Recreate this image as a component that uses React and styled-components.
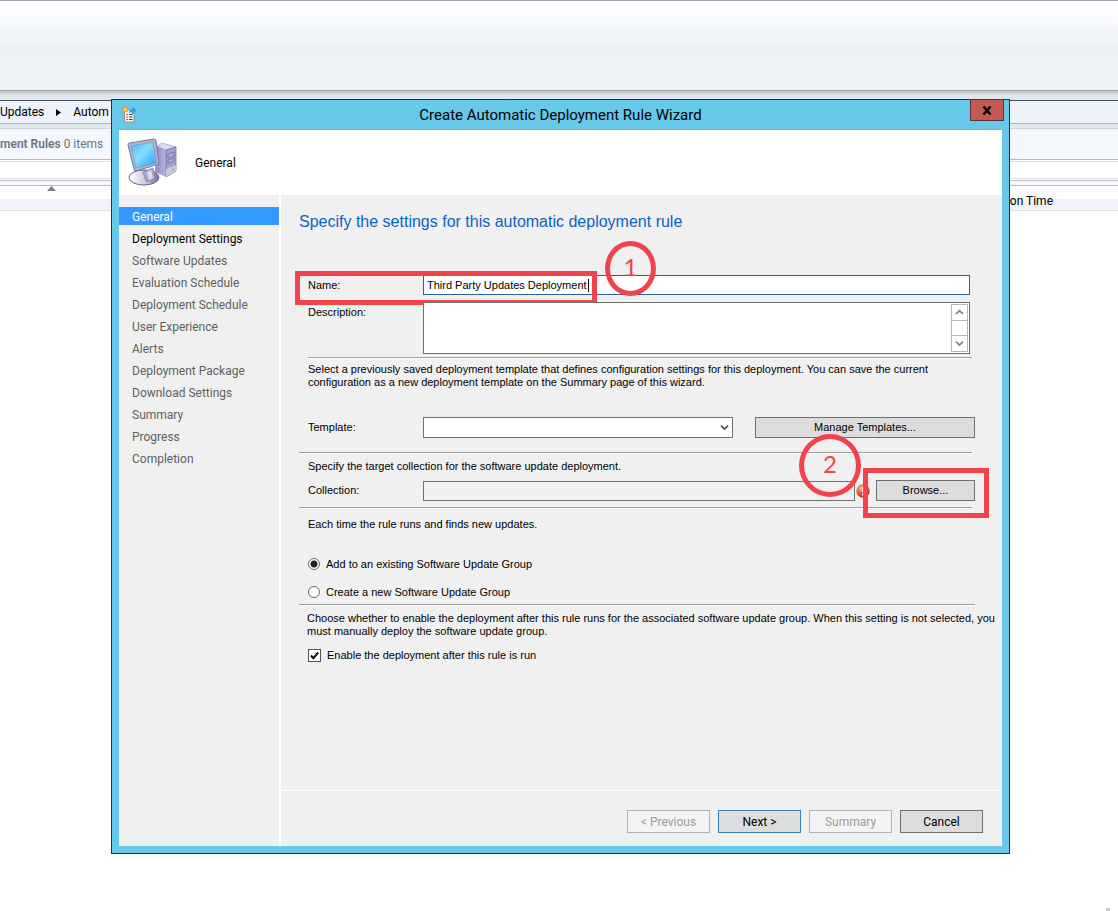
import React, { useState } from 'react';
import styled, { createGlobalStyle } from 'styled-components';

const GlobalStyle = createGlobalStyle`
    * {
        box-sizing: border-box;
    }

    body {
        margin: 0;
        background: #ffffff;
        color: #000000;
        font-family: Roboto, 'Noto Sans', sans-serif;
        font-size: 12px;
    }

    button, input, textarea, select {
        font: inherit;
        color: inherit;
        margin: 0;
        border-radius: 0;
        outline: none;
    }
`;

// ---------- console window behind the wizard ----------

const Page = styled.div`
    position: relative;
    min-height: 100vh;
    overflow: hidden;
`;

const Ribbon = styled.div`
    height: 91px;
    border-top: 1px solid #9ea2b0;
    border-bottom: 1px solid #a0a4ab;
    background: linear-gradient(#ffffff, #fbfcfd 15%, #edf1f6 50%, #eff3f8);
`;

const RibbonShadow = styled.div`
    height: 9px;
    background: linear-gradient(#c0c4ca, #dfe5ec 50%, #e1e8f0);
`;

const Breadcrumb = styled.nav`
    display: flex;
    align-items: center;
    gap: 12px;
    height: 24px;
    border-top: 1px solid #46535f;
    border-bottom: 1px solid #a9b3bf;
    background: #edf2fb;
`;

const CrumbArrow = styled.svg`
    width: 5px;
    height: 7px;
    display: block;
`;

const Gutter = styled.div`
    height: 4px;
    background: #e1e8f0;
`;

const ListTitle = styled.div`
    height: 32px;
    border-top: 1px solid #ccd4e0;
    border-bottom: 1px solid #b4b8c1;
    background: #f4f7fc;
    color: #6b7482;
    line-height: 30px;
    white-space: nowrap;

    b {
        font-weight: 600;
    }
`;

const SearchBar = styled.div`
    height: 18px;
    margin-top: 1px;
    border-top: 1px solid #dcdfe5;
    border-bottom: 1px solid #dcdfe5;
    background: #ffffff;
`;

const BarEdge = styled.div`
    height: 6px;
    margin-top: 1px;
    border-top: 1px solid #b9bcc6;
    border-bottom: 1px solid #b9bcc6;
    background: #f6f7fb;
`;

const ColumnHeader = styled.div`
    display: flex;
    justify-content: space-between;
    height: 25px;
    padding: 0 65px 0 47px;
    border-bottom: 1px solid #dde1e5;
    background: linear-gradient(#ffffff 13px, #f0f3f7 13px);
    line-height: 30px;
`;

const SortArrow = styled.svg`
    width: 9px;
    height: 5px;
`;

const Grip = styled.i`
    position: absolute;
    right: 8px;
    bottom: 0;
    width: 4px;
    height: 3px;
    background: #cccccc;
`;

// ---------- wizard window ----------

const Dialog = styled.section`
    position: absolute;
    top: 99px;
    left: 111px;
    right: 108px;
    border: 1px solid #1f3540;
    padding: 0 7px 7px;
    background: #66c9ea;
`;

const TitleBar = styled.header`
    display: flex;
    justify-content: center;
    height: 30px;
    border-bottom: 1px solid #6fb4cc;
    font-size: 15px;
    line-height: 30px;
`;

const TitleIcon = styled.svg`
    position: absolute;
    top: 5px;
    left: 9px;
    width: 17px;
    height: 18px;
`;

const CloseButton = styled.button`
    position: absolute;
    top: -1px;
    right: 5px;
    width: 34px;
    height: 22px;
    padding: 0;
    border: 1px solid #5c3337;
    background: #c35b52;

    svg {
        display: block;
        margin: 0 auto;
    }
`;

const Banner = styled.div`
    display: flex;
    align-items: center;
    gap: 16px;
    height: 65px;
    padding-left: 8px;
    background: #ffffff;
`;

const Body = styled.div`
    display: grid;
    grid-template-columns: 160px minmax(0, 1fr);
    min-height: 651px;
    background: #f0f0f0;
`;

const Steps = styled.ul`
    list-style: none;
    margin: 0;
    padding: 12px 0 0;
`;

const Step = styled.li`
    height: 18px;
    margin-bottom: 4px;
    padding-left: 13px;
    line-height: 20px;
    color: ${({ $state }) => ($state === 'current' ? '#ffffff' : $state === 'next' ? '#000000' : '#5f5f5f')};
    background: ${({ $state }) => ($state === 'current' ? '#3399ff' : 'transparent')};
`;

const Pane = styled.main`
    display: flex;
    flex-direction: column;
    border-left: 2px solid #ffffff;
`;

const Form = styled.form`
    flex: 1;
    padding: 17px 27px 0 18px;
    font-family: 'Liberation Sans', Arial, sans-serif;
    font-size: 11px;
    line-height: 13px;
`;

const Heading = styled.h1`
    margin: 0 0 43px;
    color: #0a64c0;
    font-size: 16px;
    font-weight: normal;
    line-height: 20px;
`;

const Row = styled.div`
    position: relative;
    display: grid;
    grid-template-columns: 115px 1fr ${({ $side }) => $side || ''};
    align-items: ${({ $align }) => $align || 'center'};
    margin: 0 ${({ $inset }) => ($inset ? '5px' : '0')} ${({ $bottom }) => $bottom || 0}px 9px;
`;

const Label = styled.label`
    padding-top: ${({ $top }) => ($top ? '4px' : '0')};
`;

const TextInput = styled.input`
    width: 100%;
    height: 20px;
    padding: 0 3px;
    border: 1px solid ${({ $focused }) => ($focused ? '#2b6393' : '#707070')};
    background: ${({ readOnly }) => (readOnly ? '#f0f0f0' : '#ffffff')};
`;

const Caret = styled.i`
    position: absolute;
    top: 4px;
    left: 280px;
    width: 1px;
    height: 13px;
    background: #000000;
`;

const MemoBox = styled.div`
    display: flex;
    height: 52px;
    padding: 1px;
    border: 1px solid #707070;
    background: #ffffff;
`;

const Memo = styled.textarea`
    flex: 1;
    border: 0;
    resize: none;
    background: transparent;
`;

const ScrollBar = styled.div`
    display: flex;
    flex-direction: column;
    justify-content: space-between;
    width: 17px;
    border: 1px solid #b8b8b8;
`;

const ScrollButton = styled.button`
    display: grid;
    place-items: center;
    height: 16px;
    padding: 0;
    border: 0 solid #b8b8b8;
    border-width: ${({ $up }) => ($up ? '0 0 1px' : '1px 0 0')};
    background: #ffffff;
`;

const Rule = styled.hr`
    height: 2px;
    margin: 0 ${({ $wide }) => ($wide ? 0 : 3)}px ${({ $bottom }) => $bottom}px ${({ $left }) => $left || 0}px;
    border: 0;
    border-top: 1px solid #a0a0a0;
    background: #ffffff;
`;

const Text = styled.p`
    margin: 0 0 ${({ $bottom }) => $bottom}px ${({ $left }) => $left || 9}px;
    white-space: nowrap;
`;

const SelectBox = styled.div`
    position: relative;

    select {
        display: block;
        width: 100%;
        height: 21px;
        border: 1px solid #707070;
        background: #ffffff;
        appearance: none;
    }

    svg {
        position: absolute;
        top: 7px;
        right: 4px;
    }
`;

const Side = styled.div`
    position: relative;
    display: flex;
    align-items: center;
    justify-content: space-between;
    padding-left: ${({ $left }) => $left}px;
`;

const FormButton = styled.button`
    width: ${({ $width }) => $width};
    height: 21px;
    padding: 0;
    border: 1px solid #707070;
    background: #dddddd;
`;

const Choice = styled.label`
    display: flex;
    align-items: center;
    gap: 6px;
    height: 14px;
    margin: 0 0 ${({ $bottom }) => $bottom || 0}px 9px;
`;

const Radio = styled.input`
    appearance: none;
    width: 12px;
    height: 12px;
    border: 1px solid #6a6a6a;
    border-radius: 50%;
    background: #ffffff;

    &:checked {
        background: radial-gradient(circle, #222222 3px, #ffffff 4px);
    }
`;

const Check = styled.input`
    appearance: none;
    width: 13px;
    height: 13px;
    border: 1px solid #555555;
    background: #ffffff;

    &:checked {
        background: #ffffff url("data:image/svg+xml,%3Csvg xmlns='http://www.w3.org/2000/svg' viewBox='0 0 11 11'%3E%3Cpath d='M2 5.5L4.3 8.2L9.2 2.5' fill='none' stroke='%23111' stroke-width='2'/%3E%3C/svg%3E");
    }
`;

const Footer = styled.footer`
    display: flex;
    justify-content: flex-end;
    gap: 8px;
    height: 56px;
    padding: 19px 19px 0 0;
    border-top: 1px solid #ffffff;
`;

const WizardButton = styled.button`
    width: 83px;
    height: 23px;
    padding: 0;
    border: 1px solid ${({ $primary }) => ($primary ? '#3c7fb1' : '#707070')};
    background: #dddddd;

    &:disabled {
        border-color: #adb2b5;
        background: #f4f4f4;
        color: #9b9b9b;
    }
`;

// ---------- red callouts drawn over the form ----------

const MarkBox = styled.div`
    position: absolute;
    top: ${({ $top }) => $top}px;
    left: ${({ $left }) => $left}px;
    width: ${({ $width }) => $width}px;
    height: ${({ $height }) => $height}px;
    border: 5px solid #f0434c;
    pointer-events: none;
`;

const MarkCircle = styled(MarkBox)`
    display: grid;
    place-items: center;
    padding-bottom: 4px;
    border-radius: 50%;
    color: #f0434c;
    font-family: Lato, sans-serif;
    font-size: 24px;
    line-height: 24px;
`;

const Chevron = ({ up, color = '#808080', size = 9 }) => (
    <svg width={size} height="7" viewBox="0 0 9 7">
        <path d={up ? 'M1 5L4.5 1.7L8 5' : 'M1 1.7L4.5 5L8 1.7'} fill="none" stroke={color} strokeWidth="1.7" />
    </svg>
);

const RuleIcon = () => (
    <TitleIcon viewBox="0 0 17 18">
        <path d="M3.500 5h9.500v12H3.500z" fill="#fffaf0" stroke="#a08d68" />
        <path d="M5 9.500h2M5 12h2M5 14.500h2" stroke="#777" strokeWidth="1.200" />
        <path d="M8 9.500h3.500M8 12h3.500M8 14.500h3.500" stroke="#243d70" strokeWidth="1.200" />
        <path d="M8 8c0-3 1-4 3-4V1.500l5 4-5 4V7.500c-1 0-2 0-3 .5z" fill="#35a5df" />
        <path d="M4 1v7M.5 4.500h7M1.500 2l5 5M6.500 2l-5 5" stroke="#f49a1c" strokeWidth="1.300" />
        <circle cx="4" cy="4.500" r="1.500" fill="#ffd874" />
    </TitleIcon>
);

const ComputerIcon = () => (
    <svg width="52" height="52" viewBox="-1 -2 52 52">
        <defs>
            <linearGradient id="screen" x1="0" y1="0" x2="1" y2="1">
                <stop offset="0" stopColor="#57b5ee" />
                <stop offset=".45" stopColor="#86ddff" />
                <stop offset="1" stopColor="#229bf5" />
            </linearGradient>
            <linearGradient id="side" x1="0" x2="1">
                <stop offset="0" stopColor="#8985bd" />
                <stop offset="1" stopColor="#bab7e2" />
            </linearGradient>
            <linearGradient id="base" x1="0" x2="1">
                <stop offset="0" stopColor="#ffffff" />
                <stop offset=".5" stopColor="#d0d0e5" />
                <stop offset="1" stopColor="#77739e" />
            </linearGradient>
        </defs>
        <path d="M29 7L34 4L48 8L38 11z" fill="#dcdaf3" stroke="#a4a1ca" strokeWidth=".7" />
        <path d="M29 7L38 11V38L27 33z" fill="url(#side)" />
        <path d="M38 11L48 8V32L38 38z" fill="#a5a1d0" stroke="#67639c" strokeWidth=".7" />
        <path d="M40 15l6-2v4l-6 2zM40 21l6-2v3l-6 2z" fill="#b5b2de" stroke="#6a669d" strokeWidth=".8" />
        <path d="M38 30l10-4v6l-10 6z" fill="#c7c5df" />
        <circle cx="45" cy="30.500" r="1.200" fill="#85d951" />
        <ellipse cx="16" cy="38.500" rx="15" ry="7.500" fill="url(#base)" stroke="#66638c" />
        <path d="M15 33L25 29L27 39Q24 43 18 42z" fill="#aaa8d0" stroke="#77749f" strokeWidth=".7" />
        <path d="M19 33l4-2 2 8-4 2z" fill="#dcdbed" />
        <path d="M0 6Q0 4 2 4L26 0Q28 0 28 2L31 25L8 32Q6 32 6 30z" fill="#b5b4d0" stroke="#77759c" />
        <path d="M3 7L25 3L28 24L8 29z" fill="url(#screen)" stroke="#5d91bd" strokeWidth=".6" />
    </svg>
);

const ErrorIcon = () => (
    <svg width="14" height="14" viewBox="0 0 14 14">
        <defs>
            <radialGradient id="error" cx=".35" cy=".3" r=".8">
                <stop offset="0" stopColor="#f9b08d" />
                <stop offset=".5" stopColor="#e2552e" />
                <stop offset="1" stopColor="#a82d14" />
            </radialGradient>
        </defs>
        <circle cx="7" cy="7" r="6.700" fill="url(#error)" />
        <path d="M7 3v5M7 9.500v2" stroke="#fff" strokeWidth="2" />
    </svg>
);

const STEPS = [
    'General',
    'Deployment Settings',
    'Software Updates',
    'Evaluation Schedule',
    'Deployment Schedule',
    'User Experience',
    'Alerts',
    'Deployment Package',
    'Download Settings',
    'Summary',
    'Progress',
    'Completion',
];

const stepState = (index) => (index === 0 ? 'current' : index === 1 ? 'next' : 'later');

const Console = () => (
    <>
        <Ribbon />
        <RibbonShadow />
        <Breadcrumb>
            <span>Updates</span>
            <CrumbArrow viewBox="0 0 5 7"><path d="M0 0L5 3.500L0 7z" /></CrumbArrow>
            <span>Autom</span>
        </Breadcrumb>
        <Gutter />
        <ListTitle><b>ment Rules</b> 0 items</ListTitle>
        <SearchBar />
        <BarEdge />
        <ColumnHeader>
            <SortArrow viewBox="0 0 9 5"><path d="M0 5L4.500 0L9 5z" fill="#808080" /></SortArrow>
            <span>on Time</span>
        </ColumnHeader>
        <Grip />
    </>
);

const App = () => {
    const [name, setName] = useState('Third Party Updates Deployment');
    const [group, setGroup] = useState('existing');
    const [enabled, setEnabled] = useState(true);

    return (
        <Page>
            <GlobalStyle />
            <Console />
            <Dialog role="dialog" aria-labelledby="wizard-title">
                <TitleBar>
                    <RuleIcon />
                    <span id="wizard-title">Create Automatic Deployment Rule Wizard</span>
                    <CloseButton type="button" aria-label="Close">
                        <svg width="10" height="9" viewBox="0 0 10 9">
                            <path d="M1.500 .5L8.500 8.500M8.500 .5L1.500 8.500" stroke="#000" strokeWidth="2.400" />
                        </svg>
                    </CloseButton>
                </TitleBar>
                <Banner>
                    <ComputerIcon />
                    <span>General</span>
                </Banner>
                <Body>
                    <Steps>
                        {STEPS.map((step, index) => (
                            <Step key={step} $state={stepState(index)}>{step}</Step>
                        ))}
                    </Steps>
                    <Pane>
                        <Form>
                            <Heading>Specify the settings for this automatic deployment rule</Heading>

                            <Row $inset $bottom={7}>
                                <Label htmlFor="name">Name:</Label>
                                <TextInput id="name" $focused value={name} onChange={(e) => setName(e.target.value)} />
                                <Caret />
                                <MarkBox $top={-4} $left={-13} $width={302} $height={34} />
                                <MarkCircle $top={-34} $left={297} $width={51} $height={55}>1</MarkCircle>
                            </Row>
                            <Row $inset $align="start" $bottom={3}>
                                <Label htmlFor="description" $top>Description:</Label>
                                <MemoBox>
                                    <Memo id="description" />
                                    <ScrollBar>
                                        <ScrollButton type="button" $up aria-label="Scroll up"><Chevron up /></ScrollButton>
                                        <ScrollButton type="button" aria-label="Scroll down"><Chevron /></ScrollButton>
                                    </ScrollBar>
                                </MemoBox>
                            </Row>
                            <Rule $left={9} $bottom={4} />

                            <Text $bottom={28}>
                                Select a previously saved deployment template that defines configuration settings for this deployment. You can save the current
                                <br />
                                configuration as a new deployment template on the Summary page of this wizard.
                            </Text>
                            <Row $side="242px" $bottom={14}>
                                <Label htmlFor="template">Template:</Label>
                                <SelectBox>
                                    <select id="template" />
                                    <Chevron color="#505050" />
                                </SelectBox>
                                <Side $left={22}>
                                    <FormButton type="button" $width="100%">Manage Templates...</FormButton>
                                </Side>
                            </Row>
                            <Rule $bottom={6} />

                            <Text $bottom={7}>Specify the target collection for the software update deployment.</Text>
                            <Row $side="120px" $bottom={6}>
                                <Label htmlFor="collection">Collection:</Label>
                                <TextInput id="collection" readOnly />
                                <Side $left={1}>
                                    <ErrorIcon />
                                    <FormButton type="button" $width="99px">Browse...</FormButton>
                                    <MarkBox $top={-12} $left={8} $width={126} $height={50} />
                                    <MarkCircle $top={-46} $left={-56} $width={62} $height={63}>2</MarkCircle>
                                </Side>
                            </Row>
                            <Rule $bottom={9} />

                            <Text $bottom={26}>Each time the rule runs and finds new updates.</Text>
                            <Choice $bottom={14}>
                                <Radio type="radio" name="group" checked={group === 'existing'} onChange={() => setGroup('existing')} />
                                Add to an existing Software Update Group
                            </Choice>
                            <Choice $bottom={5}>
                                <Radio type="radio" name="group" checked={group === 'new'} onChange={() => setGroup('new')} />
                                Create a new Software Update Group
                            </Choice>
                            <Rule $wide $bottom={6} />

                            <Text $left={8} $bottom={10}>
                                Choose whether to enable the deployment after this rule runs for the associated software update group. When this setting is not selected, you
                                <br />
                                must manually deploy the software update group.
                            </Text>
                            <Choice>
                                <Check type="checkbox" checked={enabled} onChange={(e) => setEnabled(e.target.checked)} />
                                Enable the deployment after this rule is run
                            </Choice>
                        </Form>
                        <Footer>
                            <WizardButton type="button" disabled>&lt; Previous</WizardButton>
                            <WizardButton type="button" $primary>Next &gt;</WizardButton>
                            <WizardButton type="button" disabled>Summary</WizardButton>
                            <WizardButton type="button">Cancel</WizardButton>
                        </Footer>
                    </Pane>
                </Body>
            </Dialog>
        </Page>
    );
};

export default App;
